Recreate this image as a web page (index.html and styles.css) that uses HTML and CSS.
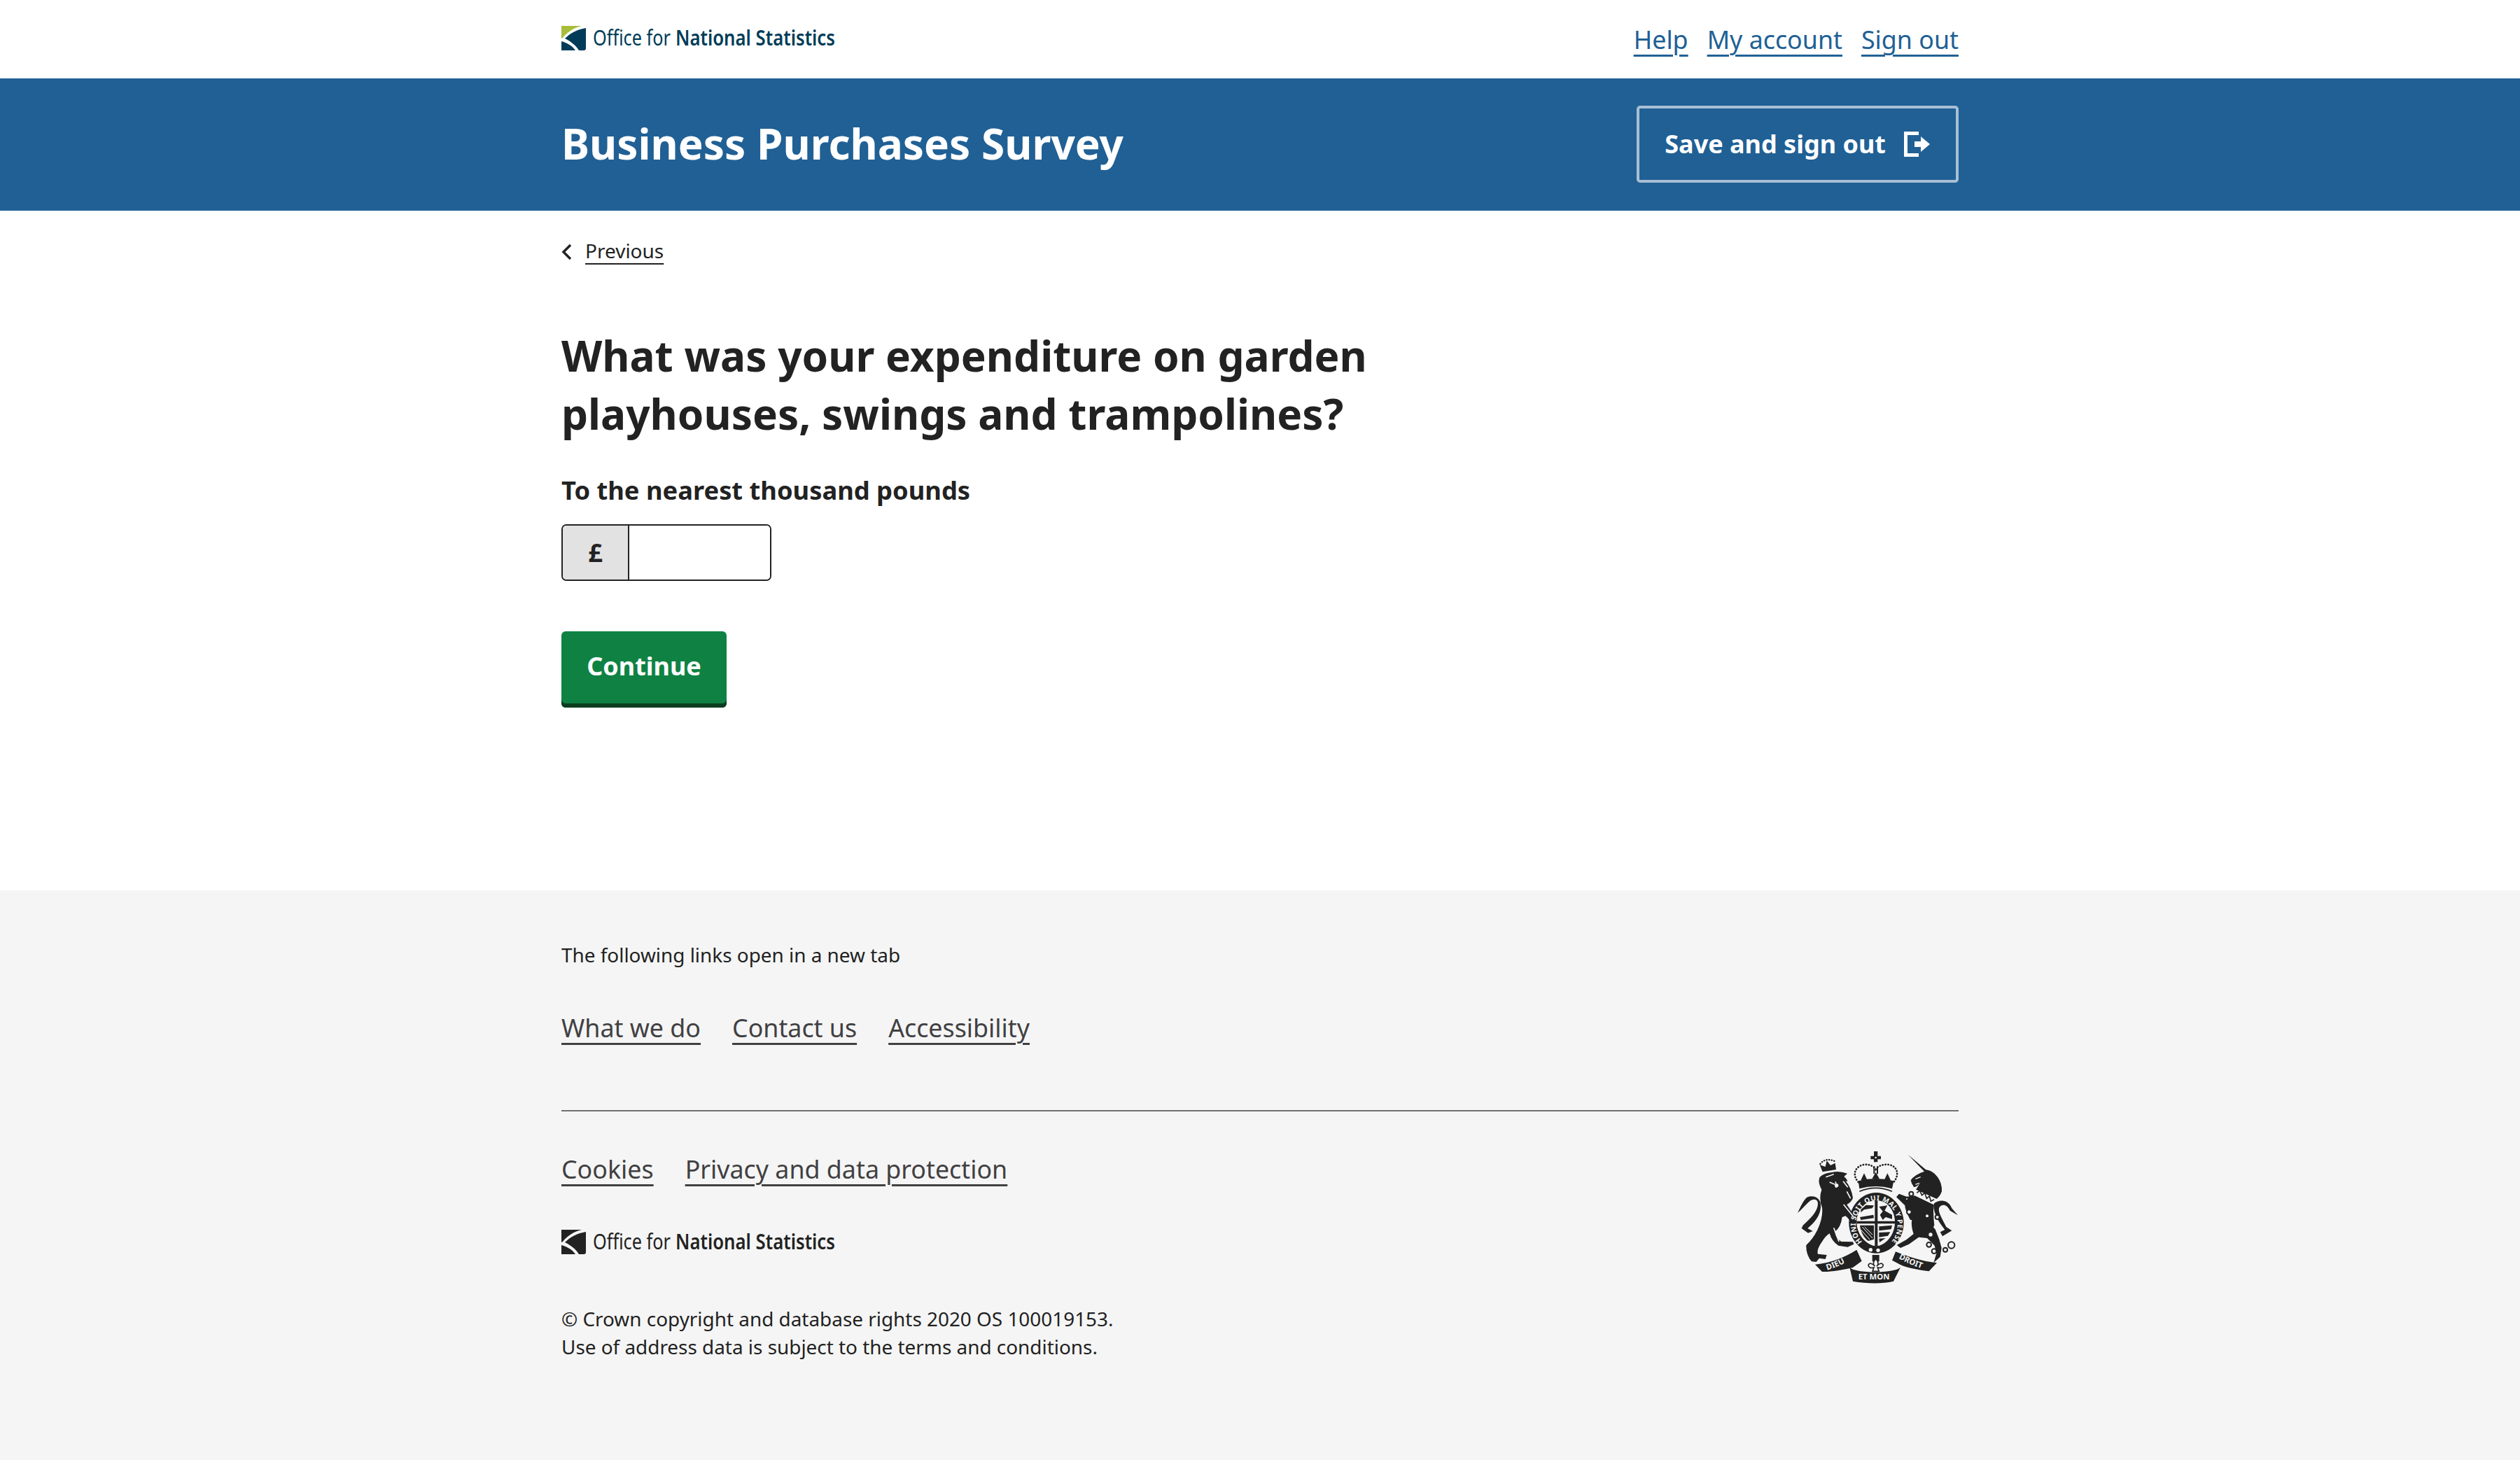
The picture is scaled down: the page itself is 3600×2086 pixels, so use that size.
FILE: index.html
```html
<!DOCTYPE html>
<html lang="en">
<head>
<meta charset="utf-8">
<title>Business Purchases Survey</title>
<link rel="stylesheet" href="styles.css">
</head>
<body>
<header>
  <div class="topbar">
    <div class="wrap topbar-in">
      <svg class="logo" width="392" height="36" viewBox="0 0 392 36" role="img" aria-label="Office for National Statistics">
        <path fill="#a8bd3a" d="M0 0H29C17 3 8 9 2 17L0 18Z"/>
        <path fill="#003c57" d="M5 18C13 10 23 5 35 3V32Q35 35 32 35H25C21 28 13 22 5 18Z"/>
        <path fill="#003c57" d="M0 22C8 24 15 28 20 35H0Z"/>
        <text class="logo-light" transform="scale(1 1.265)" x="45" y="22.1" textLength="111" lengthAdjust="spacingAndGlyphs" fill="#003c57">Office for</text>
        <text class="logo-bold" transform="scale(1 1.265)" x="163" y="22.1" textLength="228" lengthAdjust="spacingAndGlyphs" fill="#003c57">National Statistics</text>
      </svg>
      <nav class="account"><a href="#">Help</a><a href="#">My account</a><a href="#">Sign out</a></nav>
    </div>
  </div>
  <div class="banner">
    <div class="wrap banner-in">
      <div class="title">Business Purchases Survey</div>
      <a class="save" href="#">Save and sign out
        <svg width="38" height="36" viewBox="0 0 38 36"><path fill="none" stroke="#fff" stroke-width="5" d="M21 2.5H2.5V33.5H21"/><path fill="#fff" d="M15 14H24V7L37 18L24 29V22H15Z"/></svg>
      </a>
    </div>
  </div>
</header>
<main class="wrap">
  <a class="prev" href="#"><svg class="chev" width="14" height="24" viewBox="0 0 14 24"><path fill="none" stroke="#222" stroke-width="3.5" d="M13 2L3 12L13 22"/></svg><span>Previous</span></a>
  <h1>What was your expenditure on garden<br>playhouses, swings and trampolines?</h1>
  <label class="label" for="amt">To the nearest thousand pounds</label>
  <div class="amount"><span class="prefix">£</span><input id="amt" class="field" type="text"></div>
  <button class="cont" type="button">Continue</button>
</main>
<footer>
  <div class="wrap">
    <p class="note">The following links open in a new tab</p>
    <nav class="flinks first"><a href="#">What we do</a><a href="#">Contact us</a><a href="#">Accessibility</a></nav>
    <hr class="rule">
    <div class="fbottom">
      <div>
        <nav class="flinks"><a href="#">Cookies</a><a href="#">Privacy and data protection</a></nav>
        <svg class="flogo" width="392" height="36" viewBox="0 0 392 36" role="img" aria-label="Office for National Statistics">
          <path fill="#222" d="M0 0H29C17 3 8 9 2 17L0 18Z"/>
          <path fill="#222" d="M5 18C13 10 23 5 35 3V32Q35 35 32 35H25C21 28 13 22 5 18Z"/>
          <path fill="#222" d="M0 22C8 24 15 28 20 35H0Z"/>
          <text class="logo-light" transform="scale(1 1.265)" x="45" y="22.1" textLength="111" lengthAdjust="spacingAndGlyphs" fill="#222">Office for</text>
          <text class="logo-bold" transform="scale(1 1.265)" x="163" y="22.1" textLength="228" lengthAdjust="spacingAndGlyphs" fill="#222">National Statistics</text>
        </svg>
        <p class="legal">© Crown copyright and database rights 2020 OS 100019153.<br>Use of address data is subject to the terms and conditions.</p>
      </div>
      <svg class="crest" width="230" height="190" viewBox="85 65 690 570" role="img" aria-label="Royal coat of arms">
        <g fill="#222">
          <!-- lion -->
          <path d="M180 178Q200 160 232 158Q262 150 298 163L284 176Q300 190 298 198L290 194Q316 224 322 268Q316 285 296 296L332 350Q340 375 332 392L318 385Q306 355 290 345L276 350Q270 395 245 412Q248 440 272 455L322 456L326 466L300 478L260 472Q232 455 222 420Q205 430 190 455Q165 490 172 508L210 512L204 530L178 526L165 542L145 540Q120 510 122 470Q150 445 170 405Q195 350 190 310Q175 270 188 232Q170 200 180 178Z"/>
          <path d="M182 285C172 262 150 255 125 265C108 280 96 310 85 332C104 316 118 298 134 284C152 268 172 272 172 292C172 325 140 355 108 385L102 398L130 418L150 410L128 398C165 368 192 330 182 285Z"/>
          <path d="M192 156L180 126L204 134L210 108L226 128L246 118L250 146Z"/>
          <path fill="none" stroke="#222" stroke-width="7" stroke-dasharray="1 10" stroke-linecap="round" d="M182 122Q205 92 248 112"/>
          <!-- unicorn -->
          <path d="M558 82L634 146Q665 150 685 178Q705 205 703 240Q695 262 680 272L592 232L612 200Q598 220 584 222L574 205L570 192Q585 168 628 154Z"/>
          <path d="M588 258L668 296Q665 340 672 395L692 445L702 482L696 520L668 546L680 505L672 472L640 440L604 436L562 466L526 482L510 470L552 446L582 422Q570 385 575 362L568 362Q545 320 545 300L508 264L520 250L552 262Z"/>
          <path d="M668 292C700 270 732 278 746 312L772 342L738 322C726 298 708 292 694 306C682 322 702 352 722 392L746 408L706 432L696 414L716 404C690 372 664 330 668 292Z"/>
          <!-- royal crown -->
          <path d="M412 68H428V88H442V102H428V114H412V102H398V88H412Z"/>
          <path d="M410 132H416V165H410ZM424 132H430V165H424Z"/>
          <path d="M345 195Q420 175 497 195L490 228Q420 208 350 228Z"/>
          <path d="M370 162L384 192H356ZM420 158L436 186H404ZM470 162L484 192H456Z"/>
          <!-- garter -->
          <path d="M422 245C490 245 540 310 540 375C540 445 485 505 422 505C358 505 305 445 305 375C305 310 354 245 422 245Z"/>
          <!-- motto ribbon -->
          <path d="M160 553C230 546 290 520 338 490L360 538L322 566C280 576 222 586 190 584Z"/>
          <path d="M308 565C330 592 500 592 526 565L496 625C450 636 385 636 322 625Z"/>
          <path d="M505 498C560 520 620 540 682 546L648 582C600 576 540 566 510 546L490 535Z"/>
          <path d="M405 512H435V540H405Z"/>
        </g>
        <path fill="#f5f5f5" stroke="#222" stroke-width="5" d="M420 528Q438 548 424 560Q444 540 452 555Q450 572 428 566L434 582H406L412 566Q390 572 388 555Q396 540 416 560Q402 548 420 528Z"/>
        <!-- shield -->
        <path fill="#f5f5f5" d="M422 278C375 278 338 320 338 372C338 425 380 472 422 474C464 472 502 425 502 372C502 320 469 278 422 278Z"/>
        <g fill="#222">
          <path d="M416 278H428V474H416ZM338 367H502V378H338Z"/>
          <path d="M356 330L370 318L405 312L412 300L378 298L356 318ZM352 350L410 340L412 354L356 362Z"/>
          <path d="M434 305L470 300L458 322L490 340L490 358L462 350L450 362L438 340L450 325Z"/>
          <path d="M352 385H412V445L388 452C370 440 356 415 352 385Z"/>
          <path d="M434 390L490 385L486 402L434 408ZM434 416L482 414L472 430L434 436ZM434 442L462 440L436 458Z"/>
        </g>
        <path fill="none" stroke="#f5f5f5" stroke-width="3" d="M362 392L406 440M372 392L406 425M356 404L394 446"/>
        <!-- collar and highlights -->
        <path fill="#f5f5f5" d="M592 232L680 272L668 296L588 258Z"/>
        <path fill="none" stroke="#222" stroke-width="5" d="M596 246L608 236L618 256L630 246L638 270L650 260L656 282L670 274"/>
        <path fill="none" stroke="#f5f5f5" stroke-width="5" d="M206 178L240 166M248 198L250 224M222 200L244 210M280 196L300 222M296 240L312 270M282 296L326 350M240 396L262 455"/>
        <circle cx="252" cy="214" r="8" fill="#f5f5f5"/>
        <path fill="none" stroke="#f5f5f5" stroke-width="4" d="M590 186L612 178M590 210L606 204"/>
        <path fill="none" stroke="#222" stroke-width="5" d="M350 240Q420 210 490 240"/>
        <g fill="#f5f5f5" stroke="#222" stroke-width="6">
          <circle cx="572" cy="250" r="9"/><circle cx="553" cy="272" r="6"/><circle cx="563" cy="328" r="10"/><circle cx="684" cy="350" r="9"/>
          <circle cx="648" cy="468" r="10"/><circle cx="670" cy="496" r="10"/><circle cx="718" cy="490" r="9"/><circle cx="744" cy="470" r="14"/>
        </g>
        <path fill="none" stroke="#222" stroke-dasharray="1 11" stroke-linecap="round" stroke-width="8" d="M345 200C315 165 335 130 370 125C395 122 415 135 420 145C428 132 450 122 475 125C510 130 525 165 497 200"/>
        <g fill="#f5f5f5">
          <circle cx="420" cy="95" r="4"/><circle cx="398" cy="490" r="8"/><circle cx="430" cy="492" r="8"/>
          <circle cx="655" cy="425" r="8"/><circle cx="676" cy="392" r="8"/><circle cx="640" cy="345" r="6"/>
        </g>
        <defs>
          <path id="garter" d="M362 456A90 103 0 1 1 486 456"/>
          <path id="rb1" d="M212 577C250 565 290 548 322 522"/>
          <path id="rb2" d="M518 526C560 550 600 565 640 578"/>
        </defs>
        <text class="crest-small" fill="#f5f5f5"><textPath href="#garter" startOffset="0">HONI SOIT QUI MAL Y PENSE</textPath></text>
        <text class="crest-text" fill="#f5f5f5"><textPath href="#rb1" startOffset="0">DIEU</textPath></text>
        <text class="crest-text" fill="#f5f5f5"><textPath href="#rb2" startOffset="0">DROIT</textPath></text>
        <text class="crest-text" fill="#f5f5f5" x="345" y="618">ET MON</text>
      </svg>
    </div>
  </div>
</footer>
</body>
</html>
```
FILE: styles.css
```css
* { box-sizing: border-box; }
html, body { margin: 0; padding: 0; }
body { font-family: "Noto Sans", "Open Sans", sans-serif; color: #222; background: #fff; }
.wrap { width: 1996px; margin: 0 auto; }
a { color: inherit; }

.topbar { height: 112px; }
.topbar-in { height: 112px; display: flex; justify-content: space-between; align-items: center; }
.logo { display: block; margin-top: -2px; }
.logo-light { font-family: "Noto Sans", sans-serif; font-size: 24.5px; font-weight: 400; }
.logo-bold { font-family: "Noto Sans", sans-serif; font-size: 24.5px; font-weight: 600; }
.account { display: flex; gap: 27px; font-size: 35.8px; line-height: 50px; color: #206095; }

.banner { height: 189px; background: #206095; color: #fff; }
.banner-in { height: 189px; display: flex; justify-content: space-between; align-items: center; }
.title { font-size: 60.3px; font-weight: 700; line-height: 84px; margin-bottom: 4px; }
.save { display: flex; align-items: center; gap: 26px; height: 110px; margin-bottom: 2px; padding: 0 36px; border: 4px solid #a9bfd5; border-radius: 5px; color: #fff; text-decoration: none; font-size: 36px; font-weight: 700; }

main { height: 971px; padding-top: 36px; }
.prev { display: flex; align-items: center; gap: 20px; font-size: 28px; line-height: 42px; text-decoration: none; width: max-content; }
.chev { margin-top: 4px; }
.prev span { text-decoration: underline; text-decoration-thickness: 2px; text-underline-offset: 7px; }
h1 { margin: 88px 0 0; font-size: 60.3px; line-height: 83px; font-weight: 700; }
.label { display: block; margin-top: 42px; font-size: 36.3px; line-height: 50px; font-weight: 700; }
.amount { display: flex; width: 300px; height: 81px; margin-top: 24px; border: 2px solid #222; border-radius: 7px; overflow: hidden; }
.prefix { width: 95px; background: #e2e2e3; border-right: 2px solid #222; display: flex; align-items: center; justify-content: center; font-size: 36px; font-weight: 700; }
.field { flex: 1; min-width: 0; border: 0; outline: 0; padding: 0 12px; font: inherit; background: #fff; }
.cont { display: block; width: 236px; height: 109px; margin: 72px 0 0; padding: 0 0 10px; border: 0; border-radius: 6px; background: #0f8243; box-shadow: inset 0 -6px 0 #0b3e1e; color: #fff; font-family: inherit; font-size: 36px; font-weight: 700; }

footer { height: 814px; background: #f5f5f5; }
.note { margin: 0; padding-top: 72px; font-size: 27.9px; line-height: 40px; }
.flinks { display: flex; gap: 45px; font-size: 35.8px; line-height: 50px; color: #414042; }
.flinks a, .account a { text-decoration: underline; text-decoration-thickness: 3px; text-underline-offset: 8px; }
.first { margin-top: 59px; }
.rule { margin: 93px 0 0; border: 0; height: 2px; background: #707071; }
.fbottom { display: flex; justify-content: space-between; align-items: flex-start; margin-top: 57px; }
.flogo { display: block; margin-top: 62px; }
.legal { margin: 71px 0 0; font-size: 27.9px; line-height: 40px; }
.crest { display: block; margin-top: -1px; }
.crest-text { font-family: "Noto Sans", sans-serif; font-size: 34px; font-weight: 700; }
.crest-small { font-family: "Noto Sans", sans-serif; font-size: 30px; font-weight: 700; letter-spacing: 1.5px; }
```
